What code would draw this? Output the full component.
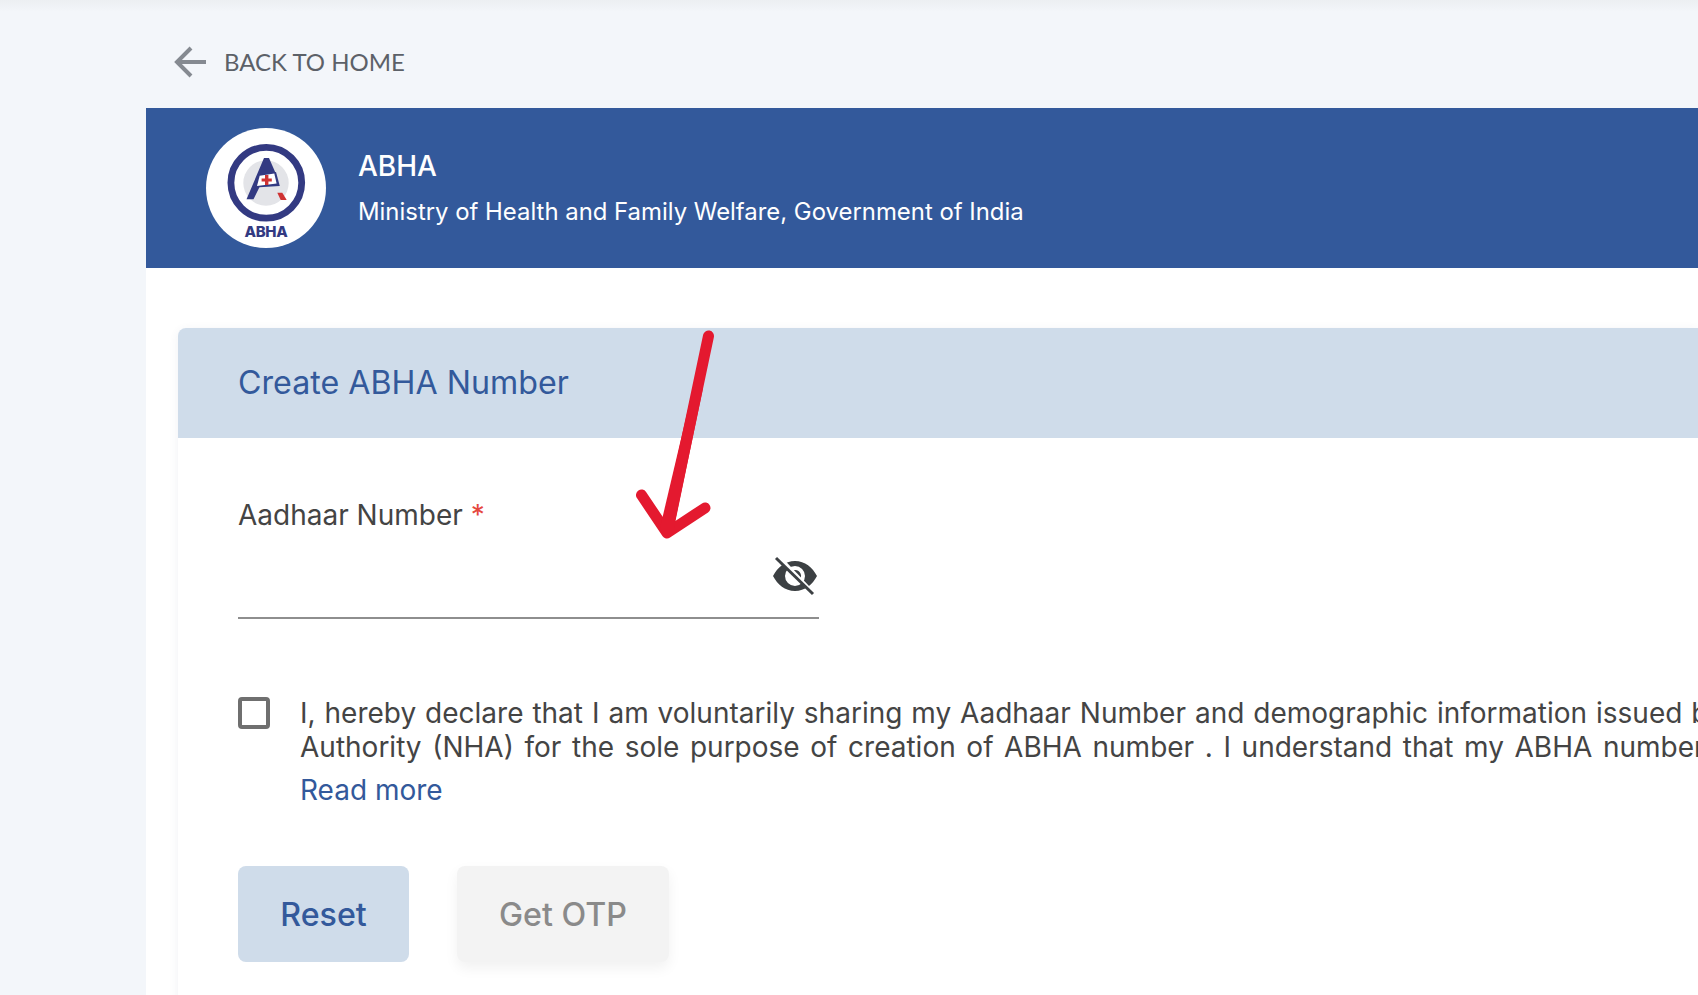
<div class="page">
  <a class="back" href="#home">
    <svg class="back-icon" viewBox="0 0 32 32" aria-hidden="true"><path d="M32 16H3M17 2 3 16l14 14" /></svg>
    <span>BACK TO HOME</span>
  </a>
  <main class="panel">
    <header class="banner">
      <svg class="logo" viewBox="0 0 120 120" aria-label="ABHA logo">
        <circle cx="60" cy="60" r="60" fill="#fff" />
        <circle cx="60" cy="55" r="22.700" fill="#e3e4e8" />
        <circle cx="60.300" cy="54.800" r="35.400" fill="none" stroke="#333a82" stroke-width="6.800" />
        <path d="M58 30h5l7 16-14 8-8.500 17.300h-7z" fill="#333a82" />
        <path d="M52.300 46.500 70 44l3.800 14-24.800 1.600z" fill="#333a82" />
        <path d="M53.700 47.700 68.300 45.600l2.300 9.900-19.600 2.600z" fill="#fff" />
        <path d="M59 47h3.400v3.400h3.400v3.200h-3.400V57H59v-3.400h-3.400v-3.200H59z" fill="#cf3232" />
        <path d="M71.300 64.700h5l4.400 7.300h-6z" fill="#cf3232" />
        <text x="60" y="109.300" text-anchor="middle">ABHA</text>
      </svg>
      <div class="banner-text">
        <h1>ABHA</h1>
        <p>Ministry of Health and Family Welfare, Government of India</p>
      </div>
    </header>

    <section class="card">
      <h2>Create ABHA Number</h2>
      <div class="card-body">
        <label class="field-label" for="aadhaar">Aadhaar Number <span>*</span></label>
        <div class="field">
          <input id="aadhaar" type="password" />
          <svg class="eye" viewBox="0 0 44 38" aria-hidden="true">
            <path fill-rule="evenodd" d="M22 4C32 4 39.500 10.500 44 19 39.500 27.500 32 34 22 34S4.500 27.500 0 19C4.500 10.500 12 4 22 4ZM22 9a10 10 0 1 0 0 20 10 10 0 0 0 0-20Z" />
            <path d="M22 13a6 6 0 0 1 4 10.500L17 14.500A6 6 0 0 1 22 13Z" />
            <path class="slash-bg" d="M5 -1 40 36" />
            <path class="slash" d="M3 1 40 37" />
          </svg>
        </div>
        <div class="consent">
          <input class="check" type="checkbox" aria-label="Consent" />
          <div>
            <p>I, hereby declare that I am voluntarily sharing my Aadhaar Number and demographic information issued by UIDAI, with National Health Authority (NHA) for the sole purpose of creation of ABHA number . I understand that my ABHA number can be used and shared for purposes as may be notified by ABDM from time to time including provision of healthcare services.</p>
            <a class="more" href="#more">Read more</a>
          </div>
        </div>
        <div class="actions">
          <button class="reset" type="button">Reset</button>
          <button class="otp" type="button" disabled>Get OTP</button>
        </div>
      </div>
      <svg class="annotation" viewBox="0 0 90 220" aria-hidden="true">
        <path d="M72.500 8 31 205M5.500 167l25.500 38 38-25" />
        <path class="taper" d="M57 60h10L38 200H24z" />
      </svg>
    </section>
  </main>
</div>

<style>
  :global(body) {
    margin: 0;
    overflow: hidden;
    background: #f3f6fa;
  }
  .page {
    box-sizing: border-box;
    height: 995px;
    overflow: hidden;
    padding-left: 146px;
    background: linear-gradient(#eceff2 0, #f3f6fa 12px);
    font-family: Inter, "Liberation Sans", sans-serif;
  }
  .back {
    display: flex;
    align-items: center;
    gap: 18px;
    height: 108px;
    padding: 15px 0 0 28px;
    box-sizing: border-box;
    color: #5c6168;
    font: 400 24px Lato, "Noto Sans", sans-serif;
    text-decoration: none;
  }
  .back-icon {
    width: 32px;
    height: 32px;
    fill: none;
    stroke: #858a91;
    stroke-width: 4;
  }
  .panel {
    width: 1552px;
    height: 887px;
    background: #fff;
  }
  .banner {
    display: flex;
    align-items: center;
    gap: 32px;
    box-sizing: border-box;
    height: 160px;
    padding-left: 60px;
    background: #33599b;
    color: #fff;
  }
  .logo {
    width: 120px;
    height: 120px;
    flex: none;
  }
  .logo text {
    fill: #333a82;
    font: 800 15px Inter, sans-serif;
    letter-spacing: -0.3px;
  }
  .banner-text h1 {
    margin: 0 0 14px;
    font-size: 28px;
    line-height: 34px;
    font-weight: 500;
  }
  .banner-text p {
    margin: 0;
    font-size: 23.900px;
    line-height: 30px;
  }
  .card {
    position: relative;
    margin: 60px 0 0 32px;
    background: #fff;
    border-radius: 8px 0 0 0;
    box-shadow: 0 2px 10px rgba(60, 80, 110, 0.08);
    height: 700px;
  }
  .card h2 {
    box-sizing: border-box;
    height: 110px;
    margin: 0;
    padding: 0 60px;
    border-radius: 8px 0 0 0;
    background: #cfdcea;
    color: #33599b;
    font-size: 32.200px;
    line-height: 110px;
    font-weight: 400;
  }
  .card-body {
    padding: 0 0 0 60px;
  }
  .field-label {
    display: block;
    padding-top: 60px;
    color: #444;
    font-size: 28px;
    line-height: 34px;
  }
  .field-label span {
    color: #e5483f;
  }
  .field {
    display: flex;
    align-items: flex-start;
    box-sizing: border-box;
    width: 581px;
    height: 70px;
    margin-top: 17px;
    padding-top: 8px;
    border-bottom: 2px solid #8e8e8e;
  }
  .field input {
    flex: 1;
    min-width: 0;
    border: 0;
    outline: 0;
    background: none;
  }
  .eye {
    flex: none;
    width: 44px;
    height: 38px;
    margin: 0 2px 0 0;
    overflow: visible;
    fill: #3c4043;
  }
  .slash-bg {
    fill: none;
    stroke: #fff;
    stroke-width: 4;
  }
  .slash {
    fill: none;
    stroke: #3c4043;
    stroke-width: 3;
  }
  .consent {
    display: flex;
    gap: 30px;
    margin-top: 78px;
  }
  .check {
    appearance: none;
    flex: none;
    box-sizing: border-box;
    width: 32px;
    height: 32px;
    margin: 0;
    border: 4px solid #6f6f6f;
    border-radius: 4px;
    background: #fff;
  }
  .consent div {
    width: 1792px;
    flex: none;
  }
  .consent p {
    display: -webkit-box;
    -webkit-box-orient: vertical;
    -webkit-line-clamp: 2;
    overflow: hidden;
    margin: 0;
    color: #444;
    font-size: 28px;
    line-height: 33.600px;
    text-align: justify;
  }
  .more {
    display: block;
    margin-top: 9px;
    color: #33599b;
    font-size: 28px;
    line-height: 34px;
    text-decoration: none;
  }
  .actions {
    display: flex;
    gap: 48px;
    margin-top: 59px;
  }
  .actions button {
    height: 96px;
    padding-bottom: 1px;
    border: 0;
    border-radius: 8px;
    font: 500 32.200px Inter, sans-serif;
  }
  .reset {
    width: 171px;
    background: #cfdcea;
    color: #33599b;
  }
  .otp {
    width: 212px;
    background: #f3f3f3;
    color: #8a8a8a;
    box-shadow: 0 6px 14px rgba(0, 0, 0, 0.06);
  }
  .annotation {
    position: absolute;
    left: 458px;
    top: 0;
    width: 90px;
    height: 220px;
    fill: none;
    stroke: #e4192f;
    stroke-width: 11;
    stroke-linecap: round;
    stroke-linejoin: round;
  }
  .taper {
    fill: #e4192f;
    stroke: none;
  }
</style>
